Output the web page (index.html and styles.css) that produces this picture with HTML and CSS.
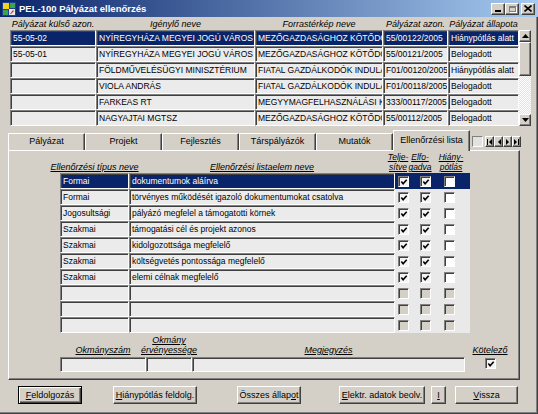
FILE: index.html
```html
<!DOCTYPE html>
<html lang="hu">
<head>
  <meta charset="UTF-8">
  <title>PEL-100 Pályázat ellenőrzés</title>
  <link rel="stylesheet" href="styles.css">
</head>
<body>
  <div class="window">
    <div class="titlebar">
      <svg class="app-icon" width="14" height="14" viewBox="0 0 14 14">
        <rect x="0" y="0" width="14" height="14" fill="#1c3f94"/>
        <rect x="1" y="1" width="6" height="6" fill="#f2d21b"/>
        <rect x="8" y="1" width="5" height="5" fill="#3fa34d"/>
        <rect x="1" y="8" width="5" height="5" fill="#3fa34d"/>
        <rect x="7" y="7" width="6" height="6" fill="#e8e8e8"/>
        <path d="M8 12 L11 8 L12 9 L9 12 Z" fill="#c0392b"/>
      </svg>
      <span class="title">PEL-100 Pályázat ellenőrzés</span>
      <div class="caption-btns">
        <span class="cap-btn"><span class="min-glyph"></span></span>
        <span class="cap-btn"><span class="max-glyph"></span></span>
        <span class="cap-btn close">
          <svg width="8" height="7" viewBox="0 0 8 7"><path d="M0.5 0.5 L7.5 6.5 M7.5 0.5 L0.5 6.5" stroke="#000" stroke-width="1.6"/></svg>
        </span>
      </div>
    </div>

    <div class="top-grid">
      <div class="grid-head">
        <span>Pályázat külső azon.</span>
        <span>Igénylő neve</span>
        <span>Forrastérkép neve</span>
        <span>Pályázat azon.</span>
        <span>Pályázat állapota</span>
      </div>
      <div class="grid-body">
        <div class="rows">
          <div class="cell sel">55-05-02</div>
          <div class="cell sel">NYÍREGYHÁZA MEGYEI JOGÚ VÁROS</div>
          <div class="cell sel">MEZŐGAZDASÁGHOZ KÖTŐDŐ</div>
          <div class="cell sel">55/00122/2005</div>
          <div class="cell sel">Hiánypótlás alatt</div>

          <div class="cell">55-05-01</div>
          <div class="cell">NYÍREGYHÁZA MEGYEI JOGÚ VÁROS</div>
          <div class="cell">MEZŐGAZDASÁGHOZ KÖTŐDŐ</div>
          <div class="cell">55/00121/2005</div>
          <div class="cell">Belogadott</div>

          <div class="cell"></div>
          <div class="cell">FÖLDMŰVELÉSÜGYI MINISZTÉRIUM</div>
          <div class="cell">FIATAL GAZDÁLKODÓK INDULÁS</div>
          <div class="cell">F01/00120/2005</div>
          <div class="cell">Hiánypótlás alatt</div>

          <div class="cell"></div>
          <div class="cell">VIOLA ANDRÁS</div>
          <div class="cell">FIATAL GAZDÁLKODÓK INDULÁS</div>
          <div class="cell">F01/00118/2005</div>
          <div class="cell">Belogadott</div>

          <div class="cell"></div>
          <div class="cell">FARKEAS RT</div>
          <div class="cell">MEGYYMAGFELHASZNÁLÁSI K</div>
          <div class="cell">333/00117/2005</div>
          <div class="cell">Belogadott</div>

          <div class="cell"></div>
          <div class="cell">NAGYAJTAI MGTSZ</div>
          <div class="cell">MEZŐGAZDASÁGHOZ KÖTŐDŐ</div>
          <div class="cell">55/00112/2005</div>
          <div class="cell">Belogadott</div>
        </div>
        <div class="vscroll">
          <span class="sb-btn">
            <svg width="7" height="4" viewBox="0 0 7 4"><path d="M3.5 0 L7 4 L0 4 Z" fill="#000"/></svg>
          </span>
          <span class="sb-thumb"></span>
          <span class="sb-track"></span>
          <span class="sb-btn">
            <svg width="7" height="4" viewBox="0 0 7 4"><path d="M0 0 L7 0 L3.5 4 Z" fill="#000"/></svg>
          </span>
        </div>
      </div>
    </div>

    <div class="tabstrip">
      <div class="tab">Pályázat</div>
      <div class="tab">Projekt</div>
      <div class="tab">Fejlesztés</div>
      <div class="tab">Társpályázók</div>
      <div class="tab">Mutatók</div>
      <div class="tab active">Ellenőrzési lista</div>
      <div class="tab-nav">
        <span class="nav-blank"></span>
        <span class="nav-btn">
          <svg width="5" height="6" viewBox="0 0 5 6"><rect x="0" y="0" width="1" height="6" fill="#000"/><path d="M5 0 L2 3 L5 6 Z" fill="#000"/></svg>
        </span>
        <span class="nav-btn">
          <svg width="4" height="6" viewBox="0 0 4 6"><path d="M4 0 L1 3 L4 6 Z" fill="#000"/></svg>
        </span>
        <span class="nav-btn">
          <svg width="4" height="6" viewBox="0 0 4 6"><path d="M0 0 L3 3 L0 6 Z" fill="#000"/></svg>
        </span>
        <span class="nav-btn">
          <svg width="5" height="6" viewBox="0 0 5 6"><path d="M0 0 L3 3 L0 6 Z" fill="#000"/><rect x="4" y="0" width="1" height="6" fill="#000"/></svg>
        </span>
      </div>
    </div>

    <div class="panel">
      <div class="list-head">
        <span class="lbl">Ellenőrzési típus neve</span>
        <span class="lbl">Ellenőrzési listaelem neve</span>
        <span class="lbl sm">Telje-<br>sítve</span>
        <span class="lbl sm">Elfo-<br>gadva</span>
        <span class="lbl sm">Hiány-<br>pótlás</span>
      </div>

      <div class="list">
        <div class="lrow sel">
          <div class="cell">Formai</div>
          <div class="cell">dokumentumok aláírva</div>
          <div class="ccell"><span class="chk on"><svg viewBox="0 0 9 9"><path d="M1.5 4 L3.5 6.5 L7.5 2" stroke="#000" stroke-width="1.8" fill="none"/></svg></span></div>
          <div class="ccell"><span class="chk on"><svg viewBox="0 0 9 9"><path d="M1.5 4 L3.5 6.5 L7.5 2" stroke="#000" stroke-width="1.8" fill="none"/></svg></span></div>
          <div class="ccell"><span class="chk"></span></div>
          <div class="ccell"></div>
        </div>
        <div class="lrow">
          <div class="cell">Formai</div>
          <div class="cell">törvényes működését igazoló dokumentumokat csatolva</div>
          <div class="ccell"><span class="chk on"><svg viewBox="0 0 9 9"><path d="M1.5 4 L3.5 6.5 L7.5 2" stroke="#000" stroke-width="1.8" fill="none"/></svg></span></div>
          <div class="ccell"><span class="chk on"><svg viewBox="0 0 9 9"><path d="M1.5 4 L3.5 6.5 L7.5 2" stroke="#000" stroke-width="1.8" fill="none"/></svg></span></div>
          <div class="ccell"><span class="chk"></span></div>
          <div class="ccell"></div>
        </div>
        <div class="lrow">
          <div class="cell">Jogosultsági</div>
          <div class="cell">pályázó megfelel a támogatotti körnek</div>
          <div class="ccell"><span class="chk on"><svg viewBox="0 0 9 9"><path d="M1.5 4 L3.5 6.5 L7.5 2" stroke="#000" stroke-width="1.8" fill="none"/></svg></span></div>
          <div class="ccell"><span class="chk on"><svg viewBox="0 0 9 9"><path d="M1.5 4 L3.5 6.5 L7.5 2" stroke="#000" stroke-width="1.8" fill="none"/></svg></span></div>
          <div class="ccell"><span class="chk"></span></div>
          <div class="ccell"></div>
        </div>
        <div class="lrow">
          <div class="cell">Szakmai</div>
          <div class="cell">támogatási cél és projekt azonos</div>
          <div class="ccell"><span class="chk on"><svg viewBox="0 0 9 9"><path d="M1.5 4 L3.5 6.5 L7.5 2" stroke="#000" stroke-width="1.8" fill="none"/></svg></span></div>
          <div class="ccell"><span class="chk on"><svg viewBox="0 0 9 9"><path d="M1.5 4 L3.5 6.5 L7.5 2" stroke="#000" stroke-width="1.8" fill="none"/></svg></span></div>
          <div class="ccell"><span class="chk"></span></div>
          <div class="ccell"></div>
        </div>
        <div class="lrow">
          <div class="cell">Szakmai</div>
          <div class="cell">kidolgozottsága megfelelő</div>
          <div class="ccell"><span class="chk on"><svg viewBox="0 0 9 9"><path d="M1.5 4 L3.5 6.5 L7.5 2" stroke="#000" stroke-width="1.8" fill="none"/></svg></span></div>
          <div class="ccell"><span class="chk on"><svg viewBox="0 0 9 9"><path d="M1.5 4 L3.5 6.5 L7.5 2" stroke="#000" stroke-width="1.8" fill="none"/></svg></span></div>
          <div class="ccell"><span class="chk"></span></div>
          <div class="ccell"></div>
        </div>
        <div class="lrow">
          <div class="cell">Szakmai</div>
          <div class="cell">költségvetés pontossága megfelelő</div>
          <div class="ccell"><span class="chk on"><svg viewBox="0 0 9 9"><path d="M1.5 4 L3.5 6.5 L7.5 2" stroke="#000" stroke-width="1.8" fill="none"/></svg></span></div>
          <div class="ccell"><span class="chk on"><svg viewBox="0 0 9 9"><path d="M1.5 4 L3.5 6.5 L7.5 2" stroke="#000" stroke-width="1.8" fill="none"/></svg></span></div>
          <div class="ccell"><span class="chk"></span></div>
          <div class="ccell"></div>
        </div>
        <div class="lrow">
          <div class="cell">Szakmai</div>
          <div class="cell">elemi célnak megfelelő</div>
          <div class="ccell"><span class="chk on"><svg viewBox="0 0 9 9"><path d="M1.5 4 L3.5 6.5 L7.5 2" stroke="#000" stroke-width="1.8" fill="none"/></svg></span></div>
          <div class="ccell"><span class="chk on"><svg viewBox="0 0 9 9"><path d="M1.5 4 L3.5 6.5 L7.5 2" stroke="#000" stroke-width="1.8" fill="none"/></svg></span></div>
          <div class="ccell"><span class="chk"></span></div>
          <div class="ccell"></div>
        </div>
        <div class="lrow">
          <div class="cell"></div>
          <div class="cell"></div>
          <div class="ccell"><span class="chk off"></span></div>
          <div class="ccell"><span class="chk off"></span></div>
          <div class="ccell"><span class="chk off"></span></div>
          <div class="ccell"></div>
        </div>
        <div class="lrow">
          <div class="cell"></div>
          <div class="cell"></div>
          <div class="ccell"><span class="chk off"></span></div>
          <div class="ccell"><span class="chk off"></span></div>
          <div class="ccell"><span class="chk off"></span></div>
          <div class="ccell"></div>
        </div>
        <div class="lrow">
          <div class="cell"></div>
          <div class="cell"></div>
          <div class="ccell"><span class="chk off"></span></div>
          <div class="ccell"><span class="chk off"></span></div>
          <div class="ccell"><span class="chk off"></span></div>
          <div class="ccell"></div>
        </div>
      </div>

      <div class="doc">
        <span class="lbl">Okmányszám</span>
        <span class="lbl">Okmány<br>érvényessége</span>
        <span class="lbl">Megjegyzés</span>
        <span class="lbl">Kötelező</span>
        <div class="field"></div>
        <div class="field"></div>
        <div class="field"></div>
        <div class="req"><span class="chk on"><svg viewBox="0 0 9 9"><path d="M1.5 4 L3.5 6.5 L7.5 2" stroke="#000" stroke-width="1.8" fill="none"/></svg></span></div>
      </div>
    </div>

    <div class="button-bar">
      <button class="btn default b-feld"><u>F</u>eldolgozás</button>
      <button class="btn b-hiany"><u>H</u>iánypótlás feldolg.</button>
      <button class="btn b-osszes">Összes állap<u>o</u>t</button>
      <button class="btn b-elektr"><u>E</u>lektr. adatok beolv.</button>
      <button class="btn b-i"><u>I</u></button>
      <button class="btn b-vissza"><u>V</u>issza</button>
    </div>
  </div>
</body>
</html>
```

FILE: styles.css
```css
body {
    margin: 0;
    padding: 0;
    background: #d4d0c8;
    font-family: "Liberation Sans", Arial, sans-serif;
    font-size: 9px;
    color: #000;
}

.window {
    width: 538px;
    height: 414px;
    box-sizing: border-box;
    overflow: hidden;
    box-shadow: inset -1px -1px 0 #404040, inset -2px -2px 0 #808080;
}

/* title bar */
.titlebar {
    height: 17px;
    display: flex;
    align-items: center;
    padding-left: 2px;
    background: linear-gradient(to right, #0a246a, #a6caf0);
    color: #fff;
    font-weight: bold;
    font-size: 9.5px;
}

.app-icon {
    margin-right: 3px;
}

.caption-btns {
    margin-left: auto;
    margin-right: 3px;
    display: flex;
}

.cap-btn {
    width: 14px;
    height: 12px;
    box-sizing: border-box;
    background: #d4d0c8;
    border: 1px solid;
    border-color: #fff #404040 #404040 #fff;
    box-shadow: inset -1px -1px 0 #808080;
    display: flex;
    align-items: center;
    justify-content: center;
}

.cap-btn.close {
    margin-left: 2px;
}

.min-glyph {
    width: 6px;
    height: 2px;
    background: #000;
    margin-top: 5px;
}

.max-glyph {
    width: 7px;
    height: 6px;
    box-sizing: border-box;
    border: 1px solid #808080;
    border-top-width: 2px;
    box-shadow: 1px 1px 0 #fff;
}

/* upper grid */
.top-grid {
    margin-left: 10px;
}

.grid-head {
    display: grid;
    grid-template-columns: 86px 159px 128px 65px 71px;
    height: 13px;
    align-items: end;
    font-style: italic;
    text-align: center;
    line-height: 12px;
    white-space: nowrap;
}

.grid-body {
    display: flex;
}

.rows {
    display: grid;
    grid-template-columns: 86px 159px 128px 65px 71px;
    grid-auto-rows: 16px;
}

.cell {
    box-sizing: border-box;
    border: 1px solid;
    border-color: #808080 #fff #fff #808080;
    box-shadow: inset 1px 1px 0 #404040;
    background: #ebebeb;
    padding-left: 2px;
    font-size: 8.5px;
    line-height: 14px;
    white-space: nowrap;
    overflow: hidden;
}

.cell.sel,
.lrow.sel .cell {
    background: #0a246a;
    color: #fff;
}

.vscroll {
    width: 12px;
    height: 96px;
    display: flex;
    flex-direction: column;
}

.sb-btn,
.sb-thumb,
.nav-btn,
.btn {
    background: #d4d0c8;
    border: 1px solid;
    border-color: #fff #404040 #404040 #fff;
    box-shadow: inset -1px -1px 0 #808080;
    box-sizing: border-box;
}

.sb-btn {
    height: 12px;
    display: flex;
    align-items: center;
    justify-content: center;
}

.sb-thumb {
    height: 34px;
}

.sb-track {
    flex: 1;
    background: repeating-conic-gradient(#fff 0 25%, #e4e2dc 0 50%) 0 0 / 2px 2px;
}

/* tabs */
.tabstrip {
    display: flex;
    align-items: flex-end;
    height: 20px;
    margin-top: 4px;
    padding-left: 8px;
}

.tab {
    width: 77px;
    height: 17px;
    box-sizing: border-box;
    border-top: 1px solid #fff;
    border-left: 1px solid #fff;
    border-right: 1px solid #404040;
    box-shadow: inset -1px 0 0 #808080;
    text-align: center;
    line-height: 15px;
    white-space: nowrap;
}

.tab.active {
    height: 21px;
    margin-bottom: -1px;
    position: relative;
    z-index: 1;
    background: #d4d0c8;
    line-height: 18px;
}

.tab-nav {
    display: flex;
    align-self: center;
    margin-left: 2px;
    margin-top: 3px;
}

.nav-blank {
    width: 11px;
    height: 11px;
    box-sizing: border-box;
    border: 1px solid;
    border-color: #808080 #fff #fff #808080;
    background: #e4e2dc;
    margin-right: 2px;
}

.nav-btn {
    width: 9px;
    height: 11px;
    display: flex;
    align-items: center;
    justify-content: center;
}

/* tab page */
.panel {
    width: 512px;
    height: 230px;
    margin-left: 8px;
    box-sizing: border-box;
    border: 1px solid;
    border-color: #fff #404040 #404040 #fff;
    box-shadow: inset -1px -1px 0 #808080;
    padding-left: 51px;
}

.lbl {
    font-style: italic;
    text-decoration: underline;
    text-align: center;
    white-space: nowrap;
    line-height: 10px;
    justify-self: center;
}

.lbl.sm {
    font-size: 8.5px;
}

.list-head {
    display: grid;
    grid-template-columns: 69px 266px 6px 38px 24px 7px;
    height: 22px;
    align-items: end;
    padding-bottom: 1px;
    box-sizing: border-box;
}

.lrow {
    display: grid;
    grid-template-columns: 69px 266px 16px 28px 20px 11px;
    height: 16px;
}

.ccell {
    background: #e9e9e9;
    display: flex;
    align-items: center;
    justify-content: center;
}

.lrow.sel .ccell {
    background: #0a246a;
}

.chk {
    width: 11px;
    height: 11px;
    box-sizing: border-box;
    border: 1px solid;
    border-color: #808080 #fff #fff #808080;
    box-shadow: inset 1px 1px 0 #404040;
    background: #fff;
    display: flex;
    align-items: center;
    justify-content: center;
}

.chk.on {
    background: #f4f4f4;
}

.chk.off {
    background: #d4d0c8;
}

.chk svg {
    width: 8px;
    height: 8px;
    margin: 1px 0 0 1px;
}

.doc {
    display: grid;
    grid-template-columns: 86px 46px 273px 50px;
    grid-template-rows: 24px 15px;
    align-items: end;
}

.doc .lbl {
    padding-bottom: 2px;
}

.field {
    height: 15px;
    box-sizing: border-box;
    border: 1px solid;
    border-color: #808080 #fff #fff #808080;
    box-shadow: inset 1px 1px 0 #404040;
    background: #ebebeb;
}

.req {
    align-self: start;
    justify-self: center;
    margin-top: 1px;
}

/* command buttons */
.button-bar {
    display: flex;
    margin-top: 6px;
    padding-left: 18px;
}

.btn {
    height: 18px;
    padding: 0;
    font-family: inherit;
    font-size: 9px;
    color: #000;
    white-space: nowrap;
}

.btn.default {
    border-color: #000;
    box-shadow: inset 1px 1px 0 #fff, inset -1px -1px 0 #404040, inset -2px -2px 0 #808080;
}

.b-feld { width: 64px; }
.b-hiany { width: 84px; margin-left: 31px; }
.b-osszes { width: 64px; margin-left: 40px; }
.b-elektr { width: 86px; margin-left: 38px; }
.b-i { width: 15px; margin-left: 6px; }
.b-vissza { width: 63px; margin-left: 9px; }
```
